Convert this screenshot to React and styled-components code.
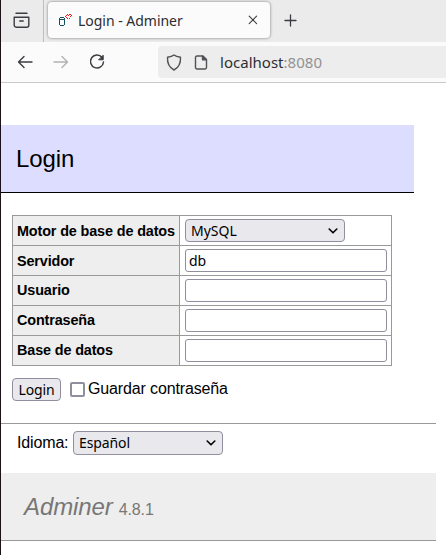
import React from "react";
import styled, { createGlobalStyle } from "styled-components";

const GlobalStyle = createGlobalStyle`
  * { box-sizing: border-box; }
  body {
    margin: 0;
    background: #fff;
    color: #000;
    font-family: "Liberation Sans", Arial, sans-serif;
  }
`;

const uiFont = `"Noto Sans", "Open Sans", sans-serif`;

const Window = styled.div`
  width: 446px;
  height: 555px;
  overflow: hidden;
  border-left: 1px solid #1a1218;
  background: #fff;
`;

const TabStrip = styled.div`
  display: flex;
  height: 42px;
  background: #ebebeb;
`;

const TabOverview = styled.div`
  width: 43px;
  border-right: 1px solid #bebebe;
  padding: 12px 0 0 12px;
  line-height: 0;
`;

const Tab = styled.div`
  display: flex;
  align-items: center;
  width: 222px;
  height: 36px;
  margin: 2px 0 0 4px;
  padding: 0 12px 0 10px;
  border-radius: 4px;
  background: #fbfbfb;
  box-shadow: 0 0 3px rgba(0, 0, 0, 0.5);
`;

const TabTitle = styled.span`
  flex: 1;
  margin-left: 5px;
  padding-top: 1px;
  font: 14px/20px ${uiFont};
  letter-spacing: -0.02px;
  color: #2d2c31;
  white-space: nowrap;
`;

const NewTab = styled.div`
  margin: 14px 0 0 14px;
  line-height: 0;
`;

const Toolbar = styled.div`
  display: flex;
  height: 41px;
  padding: 4px 0 4px 16px;
  background: #fbfbfb;
  border-bottom: 1px solid #c9c9c9;
`;

const NavIcons = styled.div`
  display: flex;
  align-items: center;
  gap: 20px;
  width: 141px;
`;

const AddressBar = styled.div`
  display: flex;
  align-items: center;
  flex: 1;
  height: 32px;
  padding-left: 8px;
  gap: 12px;
  border-radius: 4px 0 0 4px;
  background: #ededed;
`;

const Url = styled.span`
  font: 15px/22px ${uiFont};
  letter-spacing: 0.02px;
  color: #2e2e33;
`;

const Port = styled.span`
  color: #929292;
`;

const Heading = styled.h2`
  width: 413px;
  height: 68px;
  margin: 42px 0 0;
  padding: 20px 15px;
  border-bottom: 1px solid #000;
  background: #ddf;
  font-size: 24px;
  line-height: 28px;
  font-weight: 400;
  letter-spacing: -0.1px;
`;

const LoginTable = styled.table`
  width: 380px;
  margin: 22px 0 0 11px;
  border-collapse: collapse;
  table-layout: fixed;
`;

const Label = styled.th`
  width: 167px;
  height: 30px;
  padding: 0 4px;
  border: 1px solid #999;
  background: #eee;
  font-size: 14.4px;
  line-height: 17px;
  letter-spacing: -0.13px;
  text-align: left;
  white-space: nowrap;

  tr:nth-child(-n + 2) > & {
    padding-top: 1px;
  }
`;

const Cell = styled.td`
  height: 30px;
  padding: 3px 4px 3px 5px;
  border: 1px solid #999;
  line-height: 0;
`;

const TextInput = styled.input`
  display: block;
  width: 202px;
  height: 23px;
  margin: 0;
  padding: 0 3px;
  border: 1px solid #8f8f9d;
  border-radius: 3px;
  outline: none;
  background: #fff;
  font: 14px/20px ${uiFont};
  color: #000;
`;

const SelectBox = styled.div`
  display: flex;
  align-items: center;
  justify-content: space-between;
  width: ${(p) => p.$width}px;
  height: ${(p) => p.$height}px;
  padding: 0 6px 0 5px;
  border: 1px solid #8f8f9d;
  border-radius: 4px;
  background: #e9e9ed;
  font: 14px/20px ${uiFont};
  letter-spacing: ${(p) => p.$spacing || 0}px;
`;

const Actions = styled.div`
  display: flex;
  align-items: center;
  height: 23px;
  margin: 12px 0 0 11px;
`;

const Button = styled.button`
  width: 49px;
  height: 23px;
  padding: 0;
  border: 1px solid #8f8f9d;
  border-radius: 4px;
  background: #e9e9ed;
  color: #000;
  font: 14px/20px ${uiFont};
  letter-spacing: -0.15px;
`;

const Checkbox = styled.input`
  appearance: none;
  width: 15px;
  height: 15px;
  margin: 0 3px 0 9px;
  border: 2px solid #8f8f9d;
  border-radius: 2px;
  background: #fff;
`;

const CheckLabel = styled.label`
  display: flex;
  align-items: center;
  font-size: 16px;
  letter-spacing: -0.14px;
  white-space: nowrap;
`;

const CheckText = styled.span`
  padding-bottom: 2px;
  line-height: 18px;
`;

const LanguageRow = styled.div`
  display: flex;
  align-items: flex-start;
  width: 435px;
  height: 50px;
  margin-top: 22px;
  padding: 7px 0 0 16px;
  border-top: 1px solid #999;
  font-size: 16px;
  line-height: 23px;
`;

const LanguageLabel = styled.span`
  width: 56px;
  letter-spacing: -0.15px;
`;

const Brand = styled.h1`
  display: flex;
  align-items: baseline;
  width: 435px;
  height: 68px;
  margin: 0;
  padding: 20px 23px;
  border-bottom: 1px solid #999;
  background: #eee;
  color: #777;
  font-size: 24px;
  line-height: 28px;
  font-weight: 400;
`;

const BrandName = styled.i`
  margin-right: 6px;
  letter-spacing: -0.1px;
`;

const Version = styled.span`
  font-size: 16px;
  letter-spacing: -0.1px;
`;

const Line = styled.svg`
  display: block;
  flex: none;
  fill: none;
  stroke: ${(p) => p.$color || "#3c3c42"};
  stroke-width: ${(p) => p.$weight || 1.4};
  stroke-linecap: round;
  stroke-linejoin: round;
`;

const Chevron = () => (
  <Line width="10" height="6" viewBox="0 0 10 6" $color="#000" $weight={1.6}>
    <path d="M1.2 1 5 4.8 8.8 1" />
  </Line>
);

const Select = ({ value, ...rest }) => (
  <SelectBox {...rest}>
    {value}
    <Chevron />
  </SelectBox>
);

const Favicon = () => (
  <svg width="15" height="14" viewBox="0 0 15 14" shapeRendering="crispEdges">
    <path
      d="M2 4h4v1H2zM1 5h1v7H1zM6 5h1v7H6zM2 6h4v1H2zM2 12h4v1H2z"
      fill="#14505f"
    />
    <path
      d="M9 1h1v1H9zM8 2h1v1H8zM7 3h1v1H7zM8 4h1v1H8zM9 5h1v1H9zM11 1h2v1h-2zM10 2h1v1h-1zM13 2h1v1h-1zM12 3h1v1h-1zM11 5h1v1h-1z"
      fill="#f5141a"
    />
  </svg>
);

const fields = [
  ["Servidor", "db"],
  ["Usuario", ""],
  ["Contraseña", ""],
  ["Base de datos", ""],
];

export default function App() {
  return (
    <Window>
      <GlobalStyle />
      <TabStrip>
        <TabOverview>
          <Line width="17" height="17" viewBox="0 0 17 17">
            <path d="M3 1.2h11M1.2 5.2h14.6v8a2 2 0 0 1-2 2H3.2a2 2 0 0 1-2-2zM6.8 9h3.4" />
          </Line>
        </TabOverview>
        <Tab>
          <Favicon />
          <TabTitle>Login - Adminer</TabTitle>
          <Line width="10" height="10" viewBox="0 0 10 10" $weight={1.1}>
            <path d="m1.2 1.2 7.4 7.4m0-7.4L1.2 8.6" />
          </Line>
        </Tab>
        <NewTab>
          <Line width="13" height="13" viewBox="0 0 13 13" $weight={1.3}>
            <path d="M6.5 1v11M1 6.5h11" />
          </Line>
        </NewTab>
      </TabStrip>
      <Toolbar>
        <NavIcons>
          <Line width="16" height="14" viewBox="0 0 16 14">
            <path d="M15 7H1.5M7 1.5 1.5 7 7 12.5" />
          </Line>
          <Line width="16" height="14" viewBox="0 0 16 14" $color="#b2b2b4">
            <path d="M1 7h13.5M9 1.5 14.5 7 9 12.5" />
          </Line>
          <Line width="16" height="16" viewBox="0 0 16 16" $weight={1.5}>
            <path d="M13 3.3A6.5 6.5 0 1 0 14.5 8" />
            <path d="M14.2 1.6v4.2H10z" fill="#3c3c42" strokeWidth="1" />
          </Line>
        </NavIcons>
        <AddressBar>
          <Line width="16" height="17" viewBox="0 0 16 17" $color="#515156">
            <path d="M8 1C6.2 2.5 3.8 3 1.5 3.3 1.2 8.8 2.4 13.2 8 16c5.6-2.8 6.8-7.2 6.5-12.7C12.2 3 9.8 2.5 8 1z" />
          </Line>
          <Line width="14" height="15" viewBox="0 0 14 15" $color="#515156">
            <path d="M9 1H3a1.5 1.5 0 0 0-1.5 1.5v10A1.5 1.5 0 0 0 3 14h8a1.5 1.5 0 0 0 1.5-1.5v-8z" />
            <path d="M8.5 1.2v3.6h3.8z" fill="#515156" />
          </Line>
          <Url>
            localhost<Port>:8080</Port>
          </Url>
        </AddressBar>
      </Toolbar>
      <Heading>Login</Heading>
      <LoginTable>
        <tbody>
          <tr>
            <Label>Motor de base de datos</Label>
            <Cell>
              <Select value="MySQL" $width={160} $height={23} />
            </Cell>
          </tr>
          {fields.map(([name, value]) => (
            <tr key={name}>
              <Label>{name}</Label>
              <Cell>
                <TextInput defaultValue={value} aria-label={name} />
              </Cell>
            </tr>
          ))}
        </tbody>
      </LoginTable>
      <Actions>
        <Button>Login</Button>
        <CheckLabel>
          <Checkbox type="checkbox" />
          <CheckText>Guardar contraseña</CheckText>
        </CheckLabel>
      </Actions>
      <LanguageRow>
        <LanguageLabel>Idioma:</LanguageLabel>
        <Select value="Español" $width={150} $height={24} $spacing={-0.1} />
      </LanguageRow>
      <Brand>
        <BrandName>Adminer</BrandName>
        <Version>4.8.1</Version>
      </Brand>
    </Window>
  );
}
